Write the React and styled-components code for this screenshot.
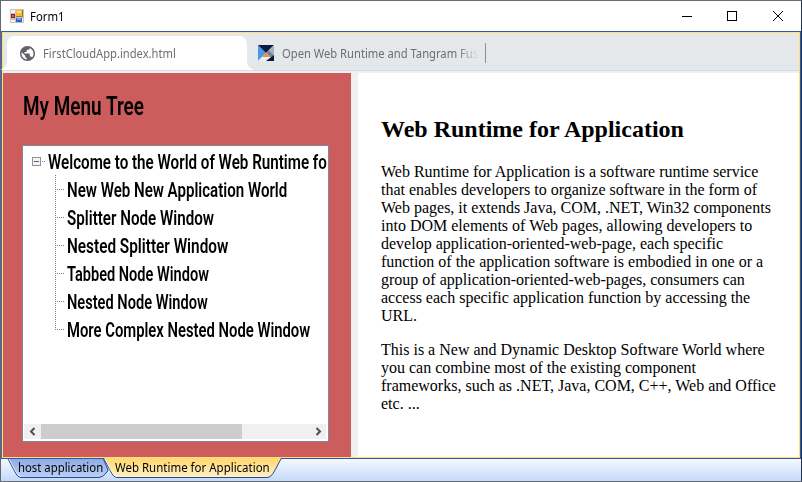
import React, { useLayoutEffect, useRef } from "react";
import styled, { createGlobalStyle } from "styled-components";

const Global = createGlobalStyle`
  * { box-sizing: border-box; }
  html, body { margin: 0; padding: 0; overflow: hidden; }
`;

const Window = styled.div`
  width: 802px;
  height: 482px;
  display: flex;
  flex-direction: column;
  border: 1px solid;
  border-color: #6c6d70 #26334f #6b6e73 #64676e;
  background: #fff;
  font-family: "Noto Sans", sans-serif;
  font-size: 12px;
  color: #000;
  overflow: hidden;
`;

const TitleBar = styled.header`
  height: 30px;
  flex: none;
  display: flex;
  align-items: center;
  padding-left: 9px;
  svg { flex: none; display: block; }
`;

const Title = styled.div`
  margin-left: 6px;
  flex: 1;
`;

const Controls = styled.div`
  display: flex;
`;

const ControlButton = styled.button`
  width: 46px;
  height: 30px;
  display: flex;
  align-items: center;
  justify-content: center;
  padding: 0 0 0 ${(p) => p.$inset || 0}px;
  border: 0;
  background: none;
`;

const Client = styled.div`
  height: 428px;
  flex: none;
  border: 1px solid #2f5aa0;
  border-left-color: #4c6a98;
`;

const Frame = styled.div`
  height: 426px;
  border: 1px solid #ffdc84;
  display: flex;
  flex-direction: column;
`;

const TabStrip = styled.div`
  height: 38px;
  flex: none;
  display: flex;
  background: #e4e8eb;
  border-bottom: 1px solid #d6d9dd;
  padding-left: 4px;
  color: #6b6e72;
`;

const ActiveTab = styled.div`
  width: 240px;
  height: 34px;
  margin-top: 3px;
  border-radius: 8px 8px 0 0;
  background: #fff;
  display: flex;
  align-items: center;
  padding-left: 13px;
  position: relative;
  &::before, &::after {
    content: "";
    position: absolute;
    bottom: 0;
    width: 8px;
    height: 8px;
  }
  &::before { left: -8px; background: radial-gradient(circle at 0 0, transparent 7.5px, #fff 8px); }
  &::after { right: -8px; background: radial-gradient(circle at 100% 0, transparent 7.5px, #fff 8px); }
`;

const InactiveTab = styled.div`
  width: 239px;
  height: 34px;
  margin-top: 3px;
  display: flex;
  align-items: center;
  padding-left: 11px;
  position: relative;
  &::after {
    content: "";
    position: absolute;
    right: 0;
    top: 7px;
    width: 1px;
    height: 20px;
    background: #8b8f94;
  }
`;

const TabLabel = styled.div`
  margin-left: 8px;
  width: ${(p) => p.$w}px;
  white-space: nowrap;
  ${(p) => p.$fade && "mask-image: linear-gradient(to right, #000 89%, transparent 100%);"}
`;

const Split = styled.div`
  flex: 1;
  display: flex;
  margin-top: 2px;
  box-shadow: 0 -2px #f0f0f0;
`;

const MenuPane = styled.aside`
  width: 348px;
  background: #cd5c5c;
  padding: 16px 0 0 19px;
  font-family: Roboto, sans-serif;
`;

const MenuTitle = styled.div`
  height: 56px;
  margin-left: 1px;
  font-size: 26px;
  line-height: 34px;
  font-weight: 600;
`;

const Splitter = styled.div`
  width: 7px;
  background: #f0f0f0;
`;

const TreeBox = styled.div`
  width: 307px;
  height: 297px;
  border: 1px solid #828790;
  background: #fff;
  padding: 1px;
  display: flex;
  flex-direction: column;
`;

const TreeBody = styled.div`
  flex: 1;
  font-size: 20px;
  font-weight: 600;
`;

const RootRow = styled.div`
  height: 28px;
  display: flex;
  align-items: center;
  padding-left: 8px;
`;

const NodeLabel = styled.div`
  width: 0;
  padding-top: 2px;
  line-height: 24px;
`;

const Expander = styled.svg`
  flex: none;
  margin-right: 2px;
`;

const Branch = styled.ul`
  list-style: none;
  margin: 0;
  padding: 0 0 0 31px;
`;

const Leaf = styled.li`
  height: 28px;
  display: flex;
  align-items: center;
`;

const Twig = styled.svg`
  flex: none;
  margin-right: 3px;
`;

const FitBox = styled.span`
  display: block;
  width: max-content;
  line-height: inherit;
  white-space: nowrap;
  transform-origin: 0 50%;
`;

const ScrollBar = styled.div`
  height: 15px;
  margin: 0 1px 1px 0;
  flex: none;
  display: flex;
  background: #f0f0f0;
`;

const Thumb = styled.div`
  width: 201px;
  background: #cdcdcd;
`;

const Track = styled.div`
  flex: 1;
`;

const Article = styled.main`
  flex: 1;
  background: #fff;
  padding: 42px 0 0 23px;
  font-family: "Liberation Serif", serif;
  font-size: 16px;
  line-height: 18px;
  white-space: nowrap;
  h2 { margin: 0 0 20px; font-size: 24px; line-height: 28px; }
  p { margin: 0 0 16px; }
`;

const BottomBar = styled.nav`
  flex: 1;
  display: flex;
  padding-left: 6px;
  background: linear-gradient(#f6f9fe, #c3d9f8);
`;

const SheetTab = styled.div`
  position: relative;
  flex: none;
  width: ${(p) => p.$w}px;
  height: 22px;
  margin-right: -8px;
  padding-left: ${(p) => (p.$active ? 12 : 11)}px;
  line-height: 18px;
  z-index: ${(p) => (p.$active ? 1 : 0)};
  > svg { position: absolute; left: 0; top: -1px; }
  > span { position: relative; }
`;

function Fit({ width, children }) {
  const ref = useRef(null);
  useLayoutEffect(() => {
    const el = ref.current;
    const apply = () => {
      el.style.transform = `scaleX(${width / el.offsetWidth})`;
    };
    apply();
    document.fonts.ready.then(apply);
  }, [width]);
  return <FitBox ref={ref}>{children}</FitBox>;
}

const FormIcon = () => (
  <svg width="14" height="14" viewBox="0 0 14 14" shapeRendering="crispEdges">
    <path fill="#c4c4c4" d="M0 0h14v14H0z" />
    <path fill="#f2f2f2" d="M1 1h4v3H1zM1 11h4v2H1zM12 9h1v4h-1z" />
    <path fill="#a9751f" d="M6 1h7v7H6z" />
    <path fill="#f5bd2d" d="M6 1h6v6H6z" />
    <path fill="#ffe394" d="M7 2h4v2H7z" />
    <path fill="#951c18" d="M1 5h4v4H1z" />
    <path fill="#e8584d" d="M2 6h2v2H2z" />
    <path fill="#2e62c9" d="M6 9h6v4H6z" />
    <path fill="#6aa4f4" d="M7 9h4v2H7z" />
  </svg>
);

const Globe = () => (
  <svg width="15" height="15" viewBox="2 2 20 20">
    <path
      fill="#5f6368"
      d="M12 2C6.480 2 2 6.480 2 12s4.480 10 10 10 10-4.480 10-10S17.520 2 12 2zm-1 17.930c-3.950-.49-7-3.850-7-7.930 0-.62.08-1.210.21-1.790L9 15v1c0 1.100.9 2 2 2v1.930zm6.900-2.540c-.26-.81-1-1.390-1.900-1.390h-1v-3c0-.55-.45-1-1-1H8v-2h2c.55 0 1-.45 1-1V7h2c1.100 0 2-.9 2-2v-.41c2.930 1.190 5 4.060 5 7.410 0 2.080-.8 3.970-2.100 5.390z"
    />
  </svg>
);

const Tangram = () => (
  <svg width="16" height="16" viewBox="0 0 16 16">
    <path fill="#4f97ea" d="M0 0l8 8-8 8z" />
    <path fill="#081a45" d="M0 0h16L8 8z" />
    <path fill="#a8b0bb" d="M16 0v10.500L10.700 5.300z" />
    <path fill="#788290" d="M10.700 5.300L16 10.600 13.300 13.300 8 8z" />
    <path fill="#f69330" d="M8 8l4 4H4z" />
    <path fill="#eef2f6" d="M4 12h8l-4 4H0z" />
    <path fill="#081a45" d="M16 10v6H8z" />
  </svg>
);

const Sheet = ({ width, label, active, labelWidth }) => {
  const id = active ? "sheetOn" : "sheetOff";
  const right = active
    ? `H${width - 15}Q${width - 11} 19.500 ${width - 7.5} 13L${width - 0.5} 0`
    : `H${width - 12}Q${width - 8} 19.500 ${width - 4} 14L${width - 3} 12L${width - 8} 0`;
  return (
    <SheetTab $w={width} $active={active}>
      <svg width={width} height="21" viewBox={`0 0 ${width} 21`}>
        <defs>
          <linearGradient id={id} x1="0" y1="0" x2="0" y2="1">
            <stop offset="0" stopColor={active ? "#ffd76d" : "#8ba9e4"} />
            <stop offset="1" stopColor={active ? "#fff1c8" : "#bdd0f5"} />
          </linearGradient>
        </defs>
        <path d={`M.5 0L7.500 13Q10.500 19.500 14 19.500${right}`} fill={`url(#${id})`} stroke="#254b94" />
        <path d="M2 1L8.500 13Q11.500 18.500 14 18.500" fill="none" stroke="#fff" strokeOpacity=".7" />
        {!active && <path d="M0 .5H105" stroke="#2f5aa0" />}
      </svg>
      <span><Fit width={labelWidth}>{label}</Fit></span>
    </SheetTab>
  );
};

const items = [
  ["New Web New Application World", 220],
  ["Splitter Node Window", 147],
  ["Nested Splitter Window", 161],
  ["Tabbed Node Window", 142],
  ["Nested Node Window", 141],
  ["More Complex Nested Node Window", 243],
];

export default function App() {
  return (
    <Window>
      <Global />
      <TitleBar>
        <FormIcon />
        <Title><Fit width={35}>Form1</Fit></Title>
        <Controls>
          <ControlButton $inset={2}>
            <svg width="10" height="10" shapeRendering="crispEdges"><path d="M0 5.500h10" stroke="#000" /></svg>
          </ControlButton>
          <ControlButton>
            <svg width="10" height="10" shapeRendering="crispEdges"><path d="M.5.500h9v9h-9z" fill="none" stroke="#000" /></svg>
          </ControlButton>
          <ControlButton>
            <svg width="10" height="10"><path d="M0 0l10 10M10 0L0 10" stroke="#000" /></svg>
          </ControlButton>
        </Controls>
      </TitleBar>
      <Client>
        <Frame>
          <TabStrip>
            <ActiveTab>
              <Globe />
              <TabLabel $w={160}><Fit width={133}>FirstCloudApp.index.html</Fit></TabLabel>
            </ActiveTab>
            <InactiveTab>
              <Tangram />
              <TabLabel $w={197} $fade><Fit width={196}>Open Web Runtime and Tangram Fus</Fit></TabLabel>
            </InactiveTab>
          </TabStrip>
          <Split>
            <MenuPane>
              <MenuTitle><Fit width={121}>My Menu Tree</Fit></MenuTitle>
              <TreeBox>
                <TreeBody>
                  <RootRow>
                    <Expander width="14" height="9" shapeRendering="crispEdges">
                      <path d="M.5.500h8v8h-8z" fill="#f4f4f4" stroke="#919191" />
                      <path d="M2 4.500h5" stroke="#4b63a7" />
                      <path d="M10 4.500h4" stroke="#808080" strokeDasharray="1 1" />
                    </Expander>
                    <NodeLabel><Fit width={279}>Welcome to the World of Web Runtime fo</Fit></NodeLabel>
                  </RootRow>
                  <Branch>
                    {items.map(([label, width], i) => (
                      <Leaf key={label}>
                        <Twig width="9" height="28" shapeRendering="crispEdges">
                          <path d={`M.5 0V${i === items.length - 1 ? 15 : 28}M0 14.500h9`} stroke="#808080" strokeDasharray="1 1" />
                        </Twig>
                        <NodeLabel><Fit width={width}>{label}</Fit></NodeLabel>
                      </Leaf>
                    ))}
                  </Branch>
                </TreeBody>
                <ScrollBar>
                  <svg width="17" height="15"><path d="M10.500 4L7 7.500l3.500 3.500" fill="none" stroke="#505050" strokeWidth="2" /></svg>
                  <Thumb />
                  <Track />
                  <svg width="17" height="15"><path d="M7.500 4L11 7.500 7.500 11" fill="none" stroke="#505050" strokeWidth="2" /></svg>
                </ScrollBar>
              </TreeBox>
            </MenuPane>
            <Splitter />
            <Article>
              <h2>Web Runtime for Application</h2>
              <p>
                Web Runtime for Application is a software runtime service<br />
                that enables developers to organize software in the form of<br />
                Web pages, it extends Java, COM, .NET, Win32 components<br />
                into DOM elements of Web pages, allowing developers to<br />
                develop application-oriented-web-page, each specific<br />
                function of the application software is embodied in one or a<br />
                group of application-oriented-web-pages, consumers can<br />
                access each specific application function by accessing the<br />
                URL.
              </p>
              <p>
                This is a New and Dynamic Desktop Software World where<br />
                you can combine most of the existing component<br />
                frameworks, such as .NET, Java, COM, C++, Web and Office<br />
                etc. ...
              </p>
            </Article>
          </Split>
        </Frame>
      </Client>
      <BottomBar>
        <Sheet width={104} label="host application" labelWidth={85} />
        <Sheet width={179} label="Web Runtime for Application" labelWidth={155} active />
      </BottomBar>
    </Window>
  );
}
